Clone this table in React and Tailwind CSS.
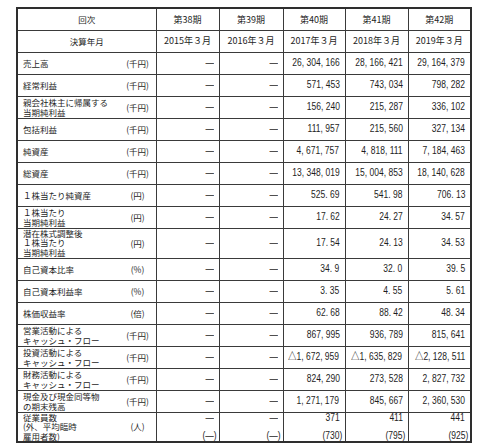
import React from "react";

const cjk = '"Noto Sans CJK JP", sans-serif';
const num = '"Liberation Sans", "Noto Sans CJK JP", sans-serif';

const rows = [
  { label: ["売上高"], unit: "(千円)", vals: ["—", "—", "26, 304, 166", "28, 166, 421", "29, 164, 379"] },
  { label: ["経常利益"], unit: "(千円)", vals: ["—", "—", "571, 453", "743, 034", "798, 282"] },
  { label: ["親会社株主に帰属する", "当期純利益"], unit: "(千円)", vals: ["—", "—", "156, 240", "215, 287", "336, 102"] },
  { label: ["包括利益"], unit: "(千円)", vals: ["—", "—", "111, 957", "215, 560", "327, 134"] },
  { label: ["純資産"], unit: "(千円)", vals: ["—", "—", "4, 671, 757", "4, 818, 111", "7, 184, 463"] },
  { label: ["総資産"], unit: "(千円)", vals: ["—", "—", "13, 348, 019", "15, 004, 853", "18, 140, 628"] },
  { label: ["１株当たり純資産"], unit: "(円)", vals: ["—", "—", "525. 69", "541. 98", "706. 13"] },
  { label: ["１株当たり", "当期純利益"], unit: "(円)", vals: ["—", "—", "17. 62", "24. 27", "34. 57"] },
  { label: ["潜在株式調整後", "１株当たり", "当期純利益"], unit: "(円)", vals: ["—", "—", "17. 54", "24. 13", "34. 53"], tall: true },
  { label: ["自己資本比率"], unit: "(%)", vals: ["—", "—", "34. 9", "32. 0", "39. 5"] },
  { label: ["自己資本利益率"], unit: "(%)", vals: ["—", "—", "3. 35", "4. 55", "5. 61"] },
  { label: ["株価収益率"], unit: "(倍)", vals: ["—", "—", "62. 68", "88. 42", "48. 34"] },
  { label: ["営業活動による", "キャッシュ・フロー"], unit: "(千円)", vals: ["—", "—", "867, 995", "936, 789", "815, 641"] },
  { label: ["投資活動による", "キャッシュ・フロー"], unit: "(千円)", vals: ["—", "—", "△1, 672, 959", "△1, 635, 829", "△2, 128, 511"] },
  { label: ["財務活動による", "キャッシュ・フロー"], unit: "(千円)", vals: ["—", "—", "824, 290", "273, 528", "2, 827, 732"] },
  { label: ["現金及び現金同等物", "の期末残高"], unit: "(千円)", vals: ["—", "—", "1, 271, 179", "845, 667", "2, 360, 530"] },
];

const staff = [
  ["—", "(—)"],
  ["—", "(—)"],
  ["371", "(730)"],
  ["411", "(795)"],
  ["441", "(925)"],
];

const periods = ["第38期", "第39期", "第40期", "第41期", "第42期"];
const dates = ["2015年３月", "2016年３月", "2017年３月", "2018年３月", "2019年３月"];

const cell = "border border-[#3a3a3a]";

function Num({ children, className = "" }) {
  return (
    <div className={"flex justify-end " + className}>
      <span className="inline-block origin-right scale-x-[0.85] whitespace-nowrap text-[10px] leading-[10px]" style={{ fontFamily: num }}>
        {children}
      </span>
    </div>
  );
}

function LabelCell({ label, unit }) {
  const lead = label.length > 2 ? "leading-[9.6px]" : label.length > 1 ? "leading-[10.4px]" : "leading-[11px]";
  return (
    <td className={cell + " pl-[5px] pr-[4px]"}>
      <div className="flex items-center justify-between">
        <div className={"text-[8.5px] " + lead} style={{ fontFamily: cjk }}>
          {label.map((l, i) => (
            <div key={i} className="whitespace-nowrap">{l}</div>
          ))}
        </div>
        <div className="w-[28px] text-center text-[8.5px] leading-[11px]" style={{ fontFamily: cjk }}>
          {unit}
        </div>
      </div>
    </td>
  );
}

export default function App() {
  return (
    <div className="h-[444px] w-[480px] overflow-hidden bg-white text-[#1e1e1e]">
      <div className="pl-[16px] pt-[7px]">
        <table className="table-fixed border-collapse border-2 border-[#2e2e2e] w-[455px]">
          <colgroup>
            <col className="w-[139px]" />
            <col className="w-[63px]" />
            <col className="w-[64px]" />
            <col className="w-[62px]" />
            <col className="w-[63px]" />
            <col className="w-[63px]" />
          </colgroup>
          <tbody>
            <tr className="h-[22px]">
              <td className={cell + " text-center text-[8.5px]"} style={{ fontFamily: cjk }}>回次</td>
              {periods.map((p) => (
                <td key={p} className={cell + " text-center text-[9px]"} style={{ fontFamily: cjk }}>
                  {p}
                </td>
              ))}
            </tr>
            <tr className="h-[22px]">
              <td className={cell + " text-center text-[8.5px]"} style={{ fontFamily: cjk }}>決算年月</td>
              {dates.map((d) => (
                <td key={d} className={cell + " whitespace-nowrap text-center text-[9px]"} style={{ fontFamily: cjk }}>
                  {d}
                </td>
              ))}
            </tr>
            {rows.map((r, i) => (
              <tr key={i} className={r.tall ? "h-[30px]" : "h-[22px]"}>
                <LabelCell label={r.label} unit={r.unit} />
                {r.vals.map((v, j) => (
                  <td key={j} className={cell + " pr-[5px]"}>
                    <Num>{v}</Num>
                  </td>
                ))}
              </tr>
            ))}
            <tr className="h-[30px]">
              <LabelCell label={["従業員数", "(外、平均臨時", "雇用者数)"]} unit="(人)" />
              {staff.map((s, j) => (
                <td key={j} className={cell + " pr-[2px]"}>
                  <Num className="pr-[3px]">{s[0]}</Num>
                  <Num className="pt-[8px]">{s[1]}</Num>
                </td>
              ))}
            </tr>
          </tbody>
        </table>
        <div className="mt-[1px] pl-[40px] text-[8px] text-[#666]" style={{ fontFamily: cjk }}>
          （注）１．売上高には、消費税等は含まれておりません。
        </div>
      </div>
    </div>
  );
}
